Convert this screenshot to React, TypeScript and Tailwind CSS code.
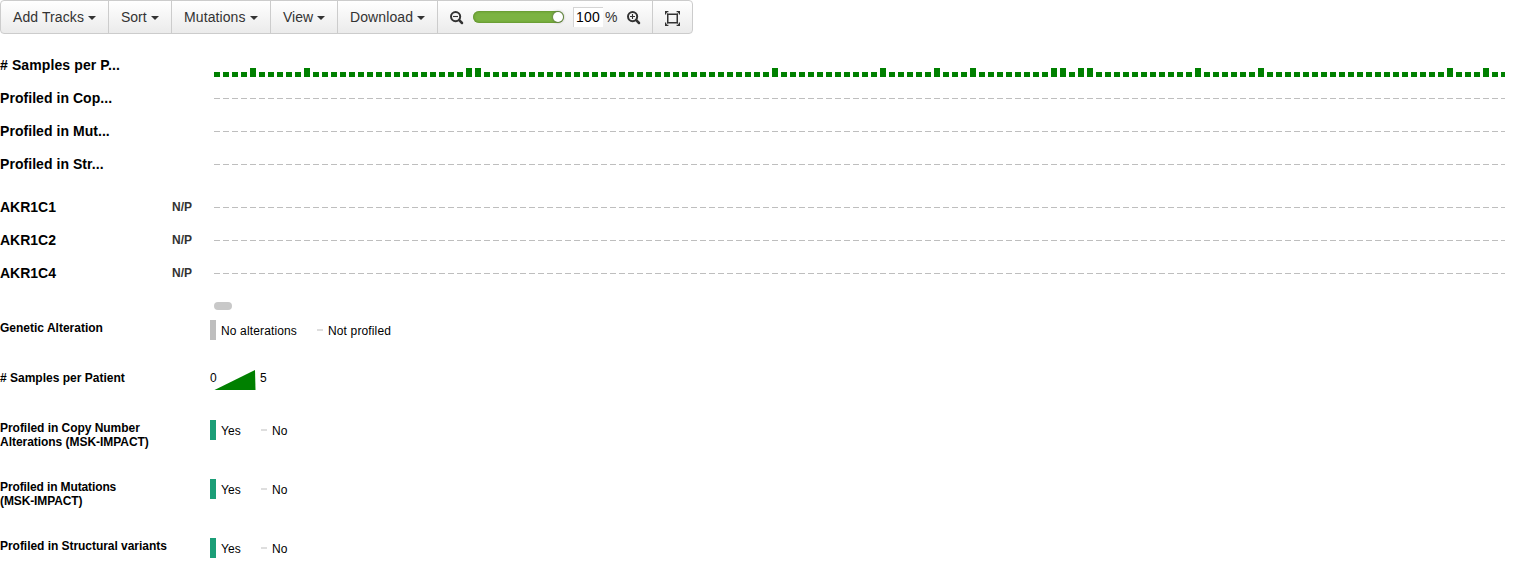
import React from "react";

const COLUMNS = Array.from({ length: 144 }, (_, i) => i);
const MULTI_SAMPLE = new Set([4, 10, 28, 29, 62, 74, 80, 84, 93, 94, 96, 97, 109, 116, 137, 141]);

const clinicalTracks = ["Profiled in Cop...", "Profiled in Mut...", "Profiled in Str..."];
const geneTracks = ["AKR1C1", "AKR1C2", "AKR1C4"];

function MenuButton({ label, width, tracking = "" }: { label: string; width: string; tracking?: string }) {
  return (
    <button className={`flex h-full items-center justify-between border-r border-[#cccccc] px-3 ${width}`}>
      <span className={`whitespace-nowrap ${tracking}`}>{label}</span>
      <span className="mt-px h-0 w-0 shrink-0 border-x-4 border-t-4 border-x-transparent border-t-[#333333]" />
    </button>
  );
}

function ZoomIcon({ plus = false }: { plus?: boolean }) {
  return (
    <svg width="14" height="14" viewBox="0 0 14 14" fill="none" stroke="#333333" className="mt-px shrink-0">
      <circle cx="5.6" cy="5.6" r="4.6" strokeWidth="2" />
      <path d="M9.2 9.2 L12 12" strokeWidth="2.5" strokeLinecap="round" />
      <path d={plus ? "M3 5.5H8M5.5 3V8" : "M3 5.5H8"} strokeWidth="1.1" />
    </svg>
  );
}

function FitIcon() {
  return (
    <svg width="15" height="15" viewBox="0 0 15 15" fill="none" stroke="#333333">
      <rect x="2.75" y="3.25" width="9.5" height="8.5" strokeWidth="1.5" />
      <path d="M0.6 3.4V0.6H3.4M11.6 0.6H14.4V3.4M14.4 11.6V14.4H11.6M3.4 14.4H0.6V11.6" strokeWidth="1.2" />
      <path d="M0.6 0.6L2.4 2.6M14.4 0.6L12.6 2.6M14.4 14.4L12.6 12.4M0.6 14.4L2.4 12.4" strokeWidth="0.9" />
    </svg>
  );
}

function Toolbar() {
  return (
    <div className="flex h-[34px] w-[693px] items-center rounded border border-[#cccccc] bg-linear-to-b from-white to-[#ebebeb] text-[14px] leading-5 text-[#333333]">
      <MenuButton label="Add Tracks" width="w-[108px]" tracking="tracking-[0.1px]" />
      <MenuButton label="Sort" width="w-[63px]" />
      <MenuButton label="Mutations" width="w-[99px]" tracking="tracking-[0.1px]" />
      <MenuButton label="View" width="w-[67px]" />
      <MenuButton label="Download" width="w-[100px]" tracking="tracking-[0.1px]" />
      <div className="flex h-full w-[215px] items-center border-r border-[#cccccc] pl-3">
        <ZoomIcon />
        <div className="ml-[9px] flex h-3 w-[91px] items-center justify-end rounded-full bg-[#7cb342] pr-px shadow-[inset_0_0_3px_#4c7a1d]">
          <div className="h-[10px] w-[10px] rounded-full bg-white shadow-[0_0_3px_#555555]" />
        </div>
        <div className="ml-[9px] flex h-5 w-[30px] items-center border-t border-l border-[#d4d4d4] bg-white pb-[2px] pl-[2px] tracking-[0.2px] text-black">
          100
        </div>
        <span className="ml-[2px] w-[22px]">%</span>
        <ZoomIcon plus />
      </div>
      <button className="flex h-full items-center pt-[3px] pl-3">
        <FitIcon />
      </button>
    </div>
  );
}

function Track({ label, tracking = "", note, counts = false }: { label: string; tracking?: string; note?: string; counts?: boolean }) {
  return (
    <div className="flex h-[33px] items-start">
      <div className={`w-[172px] pt-[9px] text-[14px] leading-4 font-bold text-black ${tracking}`}>{label}</div>
      <div className="w-[42px] pt-[9px] text-[12px] leading-4 font-bold text-[#333333]">{note}</div>
      <div className={counts ? "flex h-[29px] w-[1291px] items-end gap-[3px] overflow-hidden" : "flex h-[18px] w-[1291px] items-end gap-[3px] overflow-hidden"}>
        {COLUMNS.map((c) => (
          <div
            key={c}
            className={
              counts
                ? MULTI_SAMPLE.has(c)
                  ? "h-[9px] w-[6px] shrink-0 bg-[#008000]"
                  : "h-[5px] w-[6px] shrink-0 bg-[#008000]"
                : "h-px w-[6px] shrink-0 bg-[#bebebe]"
            }
          />
        ))}
      </div>
    </div>
  );
}

function LegendRow({ lines, height, tracking = "", children }: { lines: string[]; height: string; tracking?: string; children: React.ReactNode }) {
  return (
    <div className={`flex items-start ${height}`}>
      <div className={`w-[210px] pt-[1px] text-[12px] leading-[14px] font-bold text-black ${tracking}`}>
        {lines.map((line) => (
          <div key={line}>{line}</div>
        ))}
      </div>
      <div className="flex h-5 items-center text-[12px] leading-[14px] text-black">{children}</div>
    </div>
  );
}

function Swatches({ color, first, second, firstWidth }: { color: string; first: string; second: string; firstWidth: string }) {
  return (
    <>
      <span className={`h-5 w-[6px] ${color}`} />
      <span className={`ml-[5px] pt-[2px] tracking-[0.14px] whitespace-nowrap ${firstWidth}`}>{first}</span>
      <span className="h-[2px] w-[6px] bg-[#dedede]" />
      <span className="ml-[5px] pt-[2px] tracking-[0.14px] whitespace-nowrap">{second}</span>
    </>
  );
}

export default function App() {
  return (
    <main className="h-[578px] w-[1520px] overflow-hidden bg-white font-['Liberation_Sans',Arial,sans-serif]">
      <Toolbar />
      <section className="pt-[14px]">
        <Track label="# Samples per P..." tracking="tracking-[0.11px]" counts />
        {clinicalTracks.map((t) => (
          <Track key={t} label={t} tracking="tracking-[0.05px]" />
        ))}
        <div className="pt-[10px]">
          {geneTracks.map((t) => (
            <Track key={t} label={t} note="N/P" />
          ))}
        </div>
      </section>
      <div className="mt-[13px] ml-[214px] h-2 w-[18px] rounded-full bg-[#c8c8c8]" />
      <section className="pt-[10px]">
        <LegendRow lines={["Genetic Alteration"]} height="h-[50px]">
          <Swatches color="bg-[#bebebe]" first="No alterations" second="Not profiled" firstWidth="w-[96px]" />
        </LegendRow>
        <LegendRow lines={["# Samples per Patient"]} height="h-[50px]">
          <span className="-mt-[4px] w-[4px]">0</span>
          <svg width="42" height="20" viewBox="0 0 42 20">
            <path d="M0.5 20L41 0L41.5 20Z" fill="#008000" />
          </svg>
          <span className="-mt-[4px] ml-[4px]">5</span>
        </LegendRow>
        <LegendRow lines={["Profiled in Copy Number", "Alterations (MSK-IMPACT)"]} height="h-[59px]" tracking="tracking-[-0.04px]">
          <Swatches color="bg-[#1b9e77]" first="Yes" second="No" firstWidth="w-[40px]" />
        </LegendRow>
        <LegendRow lines={["Profiled in Mutations", "(MSK-IMPACT)"]} height="h-[59px]" tracking="tracking-[-0.12px]">
          <Swatches color="bg-[#1b9e77]" first="Yes" second="No" firstWidth="w-[40px]" />
        </LegendRow>
        <LegendRow lines={["Profiled in Structural variants"]} height="h-[40px]" tracking="tracking-[-0.04px]">
          <Swatches color="bg-[#1b9e77]" first="Yes" second="No" firstWidth="w-[40px]" />
        </LegendRow>
      </section>
    </main>
  );
}
